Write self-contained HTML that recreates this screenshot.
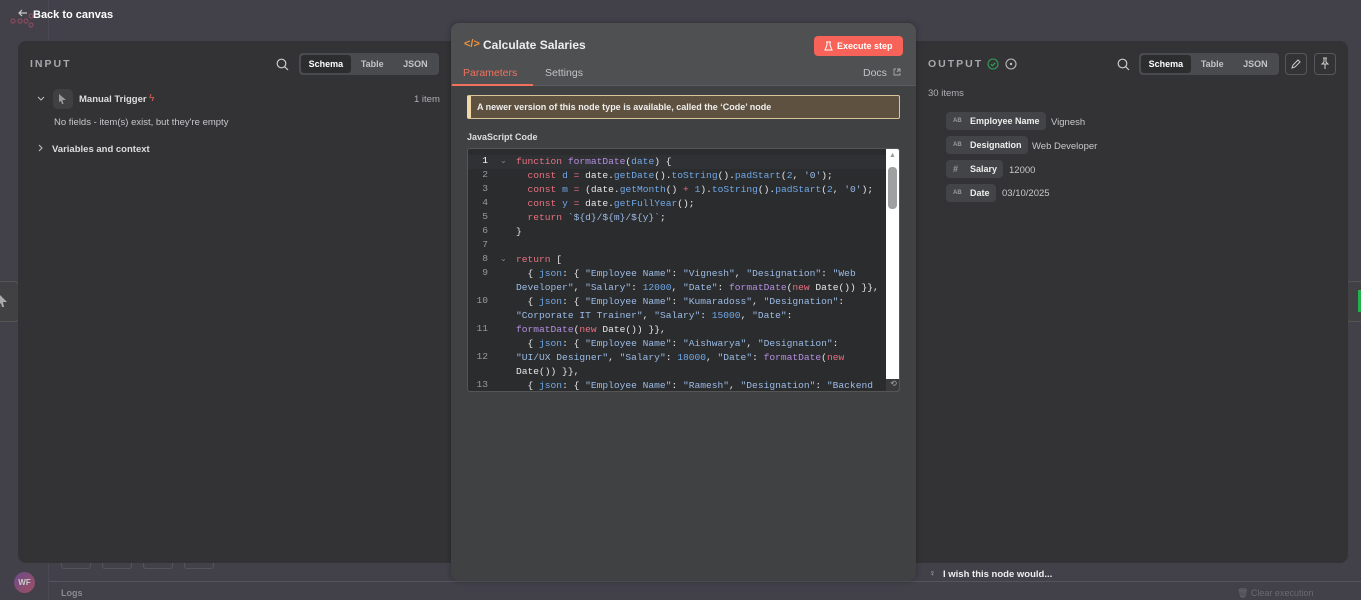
<!DOCTYPE html>
<html><head><meta charset="utf-8"><style>
*{box-sizing:border-box;margin:0;padding:0}
body{width:1361px;height:600px;overflow:hidden;background:#424049;font-family:"Liberation Sans",sans-serif;position:relative;color:#ddd}
.abs{position:absolute}
.panel{background:#333335;border-radius:8px}
.lbl{font-size:10.5px;font-weight:bold;letter-spacing:2px;color:#a9a9ad}
.seg{background:#4a4b4e;border-radius:4px;height:22px;display:flex;align-items:center;padding:2px;font-size:9px;font-weight:bold;color:#c4c4c8;width:140px}
.seg span{flex:1;text-align:center;line-height:18px}
.seg span.on{background:#2c2d2f;color:#fff;border-radius:3px;flex:1.15}
.code{font-family:"Liberation Mono",monospace;font-size:9.6px;line-height:14px;color:#e6e6e6;white-space:pre}
.k{color:#e8707f}.f{color:#b38ee0}.m{color:#6fa8e8}.s{color:#9bbbe6}.n{color:#6fa8e8}
.ln{position:absolute;left:0;width:20px;text-align:right;color:#9a9a9e;font-family:"Liberation Mono",monospace;font-size:9.6px}
.pill{position:absolute;background:#434447;border-radius:4px;height:18px;font-size:9px;font-weight:bold;color:#eee;line-height:18px;padding-left:24px;padding-right:6px;white-space:nowrap}
.pill i{position:absolute;left:7px;font-style:normal;font-size:6px;color:#999;font-weight:bold}
.val{position:absolute;font-size:9.5px;color:#c8c8cc;white-space:nowrap}
</style></head><body>
<div class="abs" style="left:0;top:0;width:49px;height:600px;border-right:1px solid #4b4953"></div>
<div class="abs" style="left:49px;top:581px;width:1312px;height:1px;background:#55535c"></div>
<svg class="abs" style="left:10px;top:12px" width="24" height="16"><g stroke="#8a4a5c" fill="none" stroke-width="1.2"><circle cx="3" cy="9" r="2"/><circle cx="10" cy="9" r="2"/><circle cx="16" cy="9" r="2"/><circle cx="21" cy="4" r="2"/><circle cx="21" cy="13" r="2"/></g></svg>
<svg class="abs" style="left:17px;top:8px" width="12" height="10"><path d="M10 5H2M5 2L2 5l3 3" stroke="#ccc" fill="none" stroke-width="1.2"/></svg>
<div class="abs" style="left:33px;top:9px;font-size:11px;font-weight:bold;color:#fff">Back to canvas</div>
<div class="abs" style="left:14px;top:572px;width:21px;height:21px;border-radius:50%;background:linear-gradient(135deg,#6a4a8a,#a05060);font-size:8px;font-weight:bold;color:#ccc;text-align:center;line-height:21px">WF</div>
<div class="abs" style="left:61px;top:588px;font-size:9px;font-weight:bold;color:#8a8a90">Logs</div>
<div class="abs" style="left:1237px;top:588px;font-size:9px;color:#6a6a70">🗑 Clear execution</div>
<div class="abs" style="left:61px;top:563px;width:30px;height:6px;border:1px solid #55535c;border-top:none;border-radius:0 0 3px 3px"></div>
<div class="abs" style="left:102px;top:563px;width:30px;height:6px;border:1px solid #55535c;border-top:none;border-radius:0 0 3px 3px"></div>
<div class="abs" style="left:143px;top:563px;width:30px;height:6px;border:1px solid #55535c;border-top:none;border-radius:0 0 3px 3px"></div>
<div class="abs" style="left:184px;top:563px;width:30px;height:6px;border:1px solid #55535c;border-top:none;border-radius:0 0 3px 3px"></div>
<div class="abs" style="left:-10px;top:281px;width:30px;height:41px;background:#414144;border:1px solid #555;border-radius:6px"></div>
<svg class="abs" style="left:0;top:295px" width="8" height="14"><path d="M0 0L7 7H3L4 12 2 12 1 8 0 9Z" fill="#aaa"/></svg>
<div class="abs" style="left:1345px;top:281px;width:30px;height:41px;background:#414144;border:1px solid #555;border-radius:6px"></div>
<div class="abs" style="left:1358px;top:290px;width:3px;height:22px;background:#22b14c"></div>

<div class="abs panel" style="left:18px;top:41px;width:440px;height:522px;border-radius:8px 0 0 8px"></div>
<div class="abs lbl" style="left:30px;top:58px">INPUT</div>
<svg class="abs" style="left:276px;top:58px" width="13" height="13"><circle cx="5.5" cy="5.5" r="4.3" stroke="#ccc" fill="none" stroke-width="1.2"/><path d="M8.8 8.8L12 12" stroke="#ccc" stroke-width="1.2"/></svg>
<div class="abs seg" style="left:299px;top:53px"><span class="on">Schema</span><span>Table</span><span>JSON</span></div>
<svg class="abs" style="left:37px;top:96px" width="8" height="6"><path d="M1 1l3 3 3-3" stroke="#bbb" fill="none" stroke-width="1.1"/></svg>
<div class="abs" style="left:53px;top:89px;width:20px;height:20px;background:#404043;border-radius:5px"></div>
<svg class="abs" style="left:59px;top:94px" width="8" height="11"><path d="M0 0L7 6H3.5L4.5 10 3 10 2 7 0 8Z" fill="#999"/></svg>
<div class="abs" style="left:79px;top:94px;font-size:9.5px;font-weight:bold;color:#ddd">Manual Trigger</div>
<div class="abs" style="left:149px;top:93px;font-size:10px;color:#e8604f">ϟ</div>
<div class="abs" style="left:414px;top:94px;font-size:9.5px;color:#b0b0b4">1 item</div>
<div class="abs" style="left:54px;top:117px;font-size:9.5px;color:#c8c8cc">No fields - item(s) exist, but they're empty</div>
<svg class="abs" style="left:38px;top:144px" width="6" height="8"><path d="M1 1l3 3-3 3" stroke="#bbb" fill="none" stroke-width="1.1"/></svg>
<div class="abs" style="left:52px;top:144px;font-size:9.5px;font-weight:bold;color:#ddd">Variables and context</div>

<div class="abs panel" style="left:910px;top:41px;width:438px;height:522px;border-radius:0 8px 8px 0"></div>
<div class="abs lbl" style="left:928px;top:58px">OUTPUT</div>
<svg class="abs" style="left:987px;top:58px" width="12" height="12"><circle cx="6" cy="6" r="5" stroke="#2ea05a" fill="none" stroke-width="1.1"/><path d="M3.8 6.2l1.6 1.5 3-3" stroke="#2ea05a" fill="none" stroke-width="1.1"/></svg>
<svg class="abs" style="left:1005px;top:58px" width="12" height="12"><circle cx="6" cy="6" r="5" stroke="#bbb" fill="none" stroke-width="1.1"/><circle cx="6" cy="6" r="1.2" fill="#bbb"/></svg>
<svg class="abs" style="left:1117px;top:58px" width="13" height="13"><circle cx="5.5" cy="5.5" r="4.3" stroke="#ccc" fill="none" stroke-width="1.2"/><path d="M8.8 8.8L12 12" stroke="#ccc" stroke-width="1.2"/></svg>
<div class="abs seg" style="left:1139px;top:53px"><span class="on">Schema</span><span>Table</span><span>JSON</span></div>
<div class="abs" style="left:1285px;top:53px;width:22px;height:22px;border:1px solid #58585c;border-radius:4px"></div>
<svg class="abs" style="left:1290px;top:58px" width="12" height="12"><path d="M2 10l1-3 5-5 2 2-5 5z" stroke="#ccc" fill="none" stroke-width="1"/></svg>
<div class="abs" style="left:1314px;top:53px;width:22px;height:22px;border:1px solid #58585c;border-radius:4px"></div>
<svg class="abs" style="left:1319px;top:57px" width="12" height="13"><path d="M4 1h4M5 1v4L3 7h6L7 5V1M6 7v5" stroke="#ccc" fill="none" stroke-width="1"/></svg>
<div class="abs" style="left:928px;top:88px;font-size:9.5px;color:#b0b0b4">30 items</div>
<div class="pill" style="left:946px;top:112px"><i>AB</i>Employee Name</div><div class="val" style="left:1051px;top:117px">Vignesh</div>
<div class="pill" style="left:946px;top:136px"><i>AB</i>Designation</div><div class="val" style="left:1032px;top:141px">Web Developer</div>
<div class="pill" style="left:946px;top:160px"><i style="font-size:9px">#</i>Salary</div><div class="val" style="left:1009px;top:165px">12000</div>
<div class="pill" style="left:946px;top:184px"><i>AB</i>Date</div><div class="val" style="left:1002px;top:188px">03/10/2025</div>
<div class="abs" style="left:929px;top:568px;font-size:9px;color:#bbb">♀</div>
<div class="abs" style="left:943px;top:569px;font-size:9.5px;font-weight:bold;color:#eee">I wish this node would...</div>

<div class="abs" style="left:451px;top:23px;width:465px;height:558px;background:#404143;border-radius:8px;box-shadow:0 0 6px rgba(0,0,0,.3);overflow:hidden">
 <div style="height:63px;background:#4f5052;border-bottom:1px solid #5a5b5e"></div>
</div>
<div class="abs" style="left:464px;top:38px;font-size:11px;font-weight:bold;color:#f0923a">&lt;/&gt;</div>
<div class="abs" style="left:483px;top:38px;font-size:12px;font-weight:bold;color:#eee">Calculate Salaries</div>
<div class="abs" style="left:814px;top:36px;width:89px;height:20px;background:#f76358;border-radius:4px;font-size:9px;font-weight:bold;color:#fff;line-height:20px;padding-left:23px">Execute step</div>
<svg class="abs" style="left:824px;top:41px" width="9" height="10"><path d="M3 1v3L1 9h7L6 4V1M2 1h5" stroke="#fff" fill="none" stroke-width="1"/></svg>
<div class="abs" style="left:463px;top:67px;font-size:10.5px;color:#f0725e">Parameters</div>
<div class="abs" style="left:452px;top:84px;width:81px;height:2px;background:#f0725e"></div>
<div class="abs" style="left:545px;top:67px;font-size:10.5px;color:#c4c4c8">Settings</div>
<div class="abs" style="left:863px;top:67px;font-size:10.5px;color:#c4c4c8">Docs</div>
<svg class="abs" style="left:893px;top:68px" width="8" height="8"><path d="M3 1H1v6h6V5M4 1h3v3M7 1L4 4" stroke="#aaa" fill="none" stroke-width="0.9"/></svg>
<div class="abs" style="left:467px;top:95px;width:433px;height:24px;background:#5e5140;border:1px solid #d9c59a;border-left:4px solid #f0d8a8;border-radius:2px;font-size:9px;font-weight:bold;color:#eee;line-height:22px;padding-left:6px">A newer version of this node type is available, called the ‘Code’ node</div>
<div class="abs" style="left:467px;top:132px;font-size:9px;font-weight:bold;color:#ddd">JavaScript Code</div>
<div class="abs" style="left:467px;top:148px;width:433px;height:244px;background:#2b2c2e;border:1px solid #555;border-radius:3px;overflow:hidden">
 <div class="abs" style="left:0;top:6px;width:418px;height:14px;background:#303134"></div>
 <div class="abs" style="left:418px;top:0;width:15px;height:244px;background:#fff"></div>
 <div class="abs" style="left:420px;top:18px;width:9px;height:42px;background:#a0a0a0;border-radius:4px"></div>
 <div class="abs" style="left:421px;top:3px;font-size:7px;color:#999">▲</div>
 <div class="abs" style="left:418px;top:230px;width:15px;height:14px;background:#3a3a3c;font-size:8px;color:#aaa;text-align:center">⟲</div>
 <div class="ln" style="top:6px;color:#fff">1</div><div class="ln" style="top:20px">2</div><div class="ln" style="top:34px">3</div><div class="ln" style="top:48px">4</div><div class="ln" style="top:62px">5</div><div class="ln" style="top:76px">6</div><div class="ln" style="top:90px">7</div><div class="ln" style="top:104px">8</div><div class="ln" style="top:118px">9</div><div class="ln" style="top:146px">10</div><div class="ln" style="top:174px">11</div><div class="ln" style="top:202px">12</div><div class="ln" style="top:230px">13</div>
 <div class="abs" style="left:32px;top:7px;font-size:8px;color:#888">⌄</div>
 <div class="abs" style="left:32px;top:105px;font-size:8px;color:#888">⌄</div>
 <div class="abs code" style="left:48px;top:6px"><span class="k">function</span> <span class="f">formatDate</span>(<span class="m">date</span>) {
  <span class="k">const</span> <span class="m">d</span> <span class="k">=</span> date.<span class="m">getDate</span>().<span class="m">toString</span>().<span class="m">padStart</span>(<span class="n">2</span>, <span class="s">'0'</span>);
  <span class="k">const</span> <span class="m">m</span> <span class="k">=</span> (date.<span class="m">getMonth</span>() <span class="k">+</span> <span class="n">1</span>).<span class="m">toString</span>().<span class="m">padStart</span>(<span class="n">2</span>, <span class="s">'0'</span>);
  <span class="k">const</span> <span class="m">y</span> <span class="k">=</span> date.<span class="m">getFullYear</span>();
  <span class="k">return</span> <span class="s">`${d}/${m}/${y}`</span>;
}

<span class="k">return</span> [
  { <span class="m">json</span>: { <span class="s">"Employee Name"</span>: <span class="s">"Vignesh"</span>, <span class="s">"Designation"</span>: <span class="s">"Web</span>
<span class="s">Developer"</span>, <span class="s">"Salary"</span>: <span class="n">12000</span>, <span class="s">"Date"</span>: <span class="f">formatDate</span>(<span class="k">new</span> Date()) }},
  { <span class="m">json</span>: { <span class="s">"Employee Name"</span>: <span class="s">"Kumaradoss"</span>, <span class="s">"Designation"</span>:
<span class="s">"Corporate IT Trainer"</span>, <span class="s">"Salary"</span>: <span class="n">15000</span>, <span class="s">"Date"</span>:
<span class="f">formatDate</span>(<span class="k">new</span> Date()) }},
  { <span class="m">json</span>: { <span class="s">"Employee Name"</span>: <span class="s">"Aishwarya"</span>, <span class="s">"Designation"</span>:
<span class="s">"UI/UX Designer"</span>, <span class="s">"Salary"</span>: <span class="n">18000</span>, <span class="s">"Date"</span>: <span class="f">formatDate</span>(<span class="k">new</span>
Date()) }},
  { <span class="m">json</span>: { <span class="s">"Employee Name"</span>: <span class="s">"Ramesh"</span>, <span class="s">"Designation"</span>: <span class="s">"Backend</span></div>
</div>
</body></html>
